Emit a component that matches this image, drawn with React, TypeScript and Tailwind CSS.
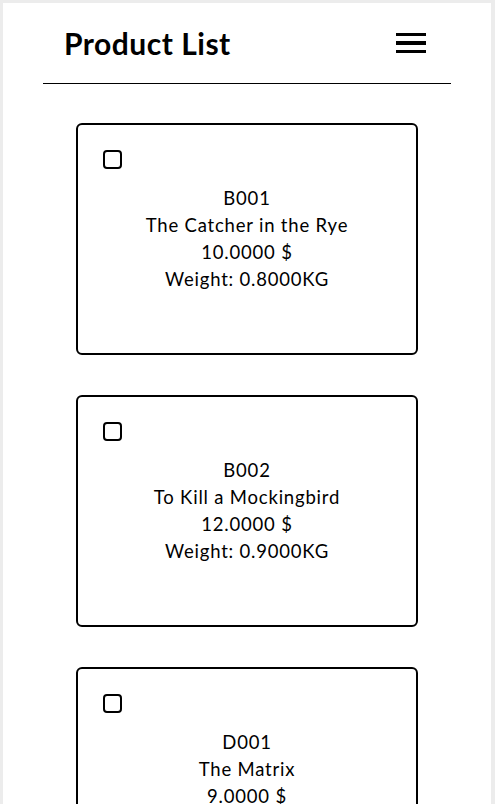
const products = [
  { sku: 'B001', name: 'The Catcher in the Rye', price: '10.0000 $', extra: 'Weight: 0.8000KG' },
  { sku: 'B002', name: 'To Kill a Mockingbird', price: '12.0000 $', extra: 'Weight: 0.9000KG' },
  { sku: 'D001', name: 'The Matrix', price: '9.0000 $', extra: 'Size: 700 MB' },
];

const App = () => {
  return (
    <div className="h-screen overflow-hidden bg-[#ececec] pt-[3px] pl-[3px] pr-[4px] text-black font-['Lato',sans-serif]">
      <div className="bg-white min-h-[801px] overflow-hidden">
        <header className="mx-10 h-[81px] flex items-center justify-between border-b border-black">
          <h1 className="pl-[21px] text-[30px] font-bold leading-none tracking-[0.5px]">
            Product List
          </h1>
          <button className="mr-[25px] flex flex-col gap-[5px] w-[30px]">
            <span className="block h-[3.5px] w-full bg-black"></span>
            <span className="block h-[3.5px] w-full bg-black"></span>
            <span className="block h-[3.5px] w-full bg-black"></span>
          </button>
        </header>

        <section className="mt-[39px] flex flex-col items-center gap-10">
          {products.map((p) => (
            <div
              key={p.sku}
              className="w-[70%] h-[232px] shrink-0 border-2 border-black rounded-md p-[25px]"
            >
              <div className="w-[19px] h-[19px] border-2 border-black rounded-[4px]"></div>
              <div className="mt-4 text-center text-[18.5px] leading-[27px] tracking-[0.8px]">
                <p>{p.sku}</p>
                <p>{p.name}</p>
                <p>{p.price}</p>
                <p>{p.extra}</p>
              </div>
            </div>
          ))}
        </section>
      </div>
    </div>
  );
};

export default App;
